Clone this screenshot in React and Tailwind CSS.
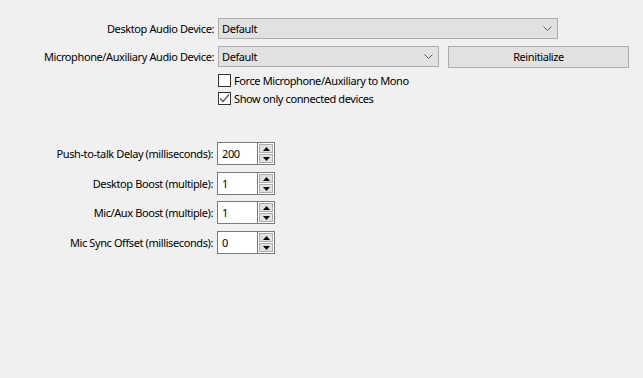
import React from 'react'

const font = { fontFamily: '"Noto Sans", "Open Sans", sans-serif' }

function Combo({ width, value }) {
    return (
        <div className={`h-[21px] ${width} bg-[#e1e1e1] border border-[#adadad] flex items-center justify-between pl-[3px] pr-[5px]`}>
            <span>{value}</span>
            <svg width="9" height="5" viewBox="0 0 9 5">
                <path d="M0.5 0.5 L4.5 4.5 L8.5 0.5" fill="none" stroke="#5a5a5a" strokeWidth="1" />
            </svg>
        </div>
    )
}

function CheckRow({ label, checked, className }) {
    return (
        <div className={`flex items-center h-[14px] pl-[218px] ${className}`}>
            <div className="w-[13px] h-[13px] border border-[#333333] bg-white flex items-center justify-center">
                {checked &&
                    <svg width="11" height="11" viewBox="0 0 11 11">
                        <path d="M1 5.5 L4 8.5 L10 1.5" fill="none" stroke="#555555" strokeWidth="1.2" />
                    </svg>
                }
            </div>
            <span className="ml-[3px]">{label}</span>
        </div>
    )
}

function Spin({ label, value, className }) {
    return (
        <div className={`flex items-center h-[23px] ${className}`}>
            <div className="w-[214px] text-right pr-[1px]">{label}</div>
            <div className="ml-[3px] flex h-[23px]">
                <div className="w-[41px] h-full bg-white border border-[#7a7a7a] pl-[4px] flex items-center">
                    {value}
                </div>
                <div className="w-[17px] h-full bg-white border-y border-r border-[#7a7a7a] flex flex-col gap-[1px] p-[1px]">
                    <div className="flex-1 bg-[#e1e1e1] border border-[#adadad] flex items-center justify-center">
                        <svg width="7" height="4" viewBox="0 0 7 4"><path d="M0 4 L3.5 0 L7 4 Z" fill="#000" /></svg>
                    </div>
                    <div className="flex-1 bg-[#e1e1e1] border border-[#adadad] flex items-center justify-center">
                        <svg width="7" height="4" viewBox="0 0 7 4"><path d="M0 0 L3.5 4 L7 0 Z" fill="#000" /></svg>
                    </div>
                </div>
            </div>
        </div>
    )
}

export default function App() {
    return (
        <div className="w-[643px] h-[378px] bg-[#f0f0f0] text-[11px] tracking-[-0.4px] text-black pt-[18px] leading-none" style={font}>
            {/* DEVICES */}
            <div className="flex items-center h-[21px]">
                <div className="w-[214px] text-right">Desktop Audio Device:</div>
                <div className="ml-[4px]"><Combo width="w-[340px]" value="Default" /></div>
            </div>
            <div className="flex items-center h-[21px] mt-[7px]">
                <div className="w-[214px] text-right">Microphone/Auxiliary Audio Device:</div>
                <div className="ml-[4px]"><Combo width="w-[221px]" value="Default" /></div>
                <button className="ml-[9px] w-[181px] h-[22px] bg-[#e1e1e1] border border-[#adadad] flex items-center justify-center">
                    Reinitialize</button>
            </div>
            <CheckRow className="mt-[6px]" label="Force Microphone/Auxiliary to Mono" />
            <CheckRow className="mt-[4px]" label="Show only connected devices" checked />
            {/* SPINBOXES */}
            <Spin className="mt-[37px]" label="Push-to-talk Delay (milliseconds):" value="200" />
            <Spin className="mt-[7px]" label="Desktop Boost (multiple):" value="1" />
            <Spin className="mt-[6px]" label="Mic/Aux Boost (multiple):" value="1" />
            <Spin className="mt-[7px]" label="Mic Sync Offset (milliseconds):" value="0" />
        </div>
    )
}
